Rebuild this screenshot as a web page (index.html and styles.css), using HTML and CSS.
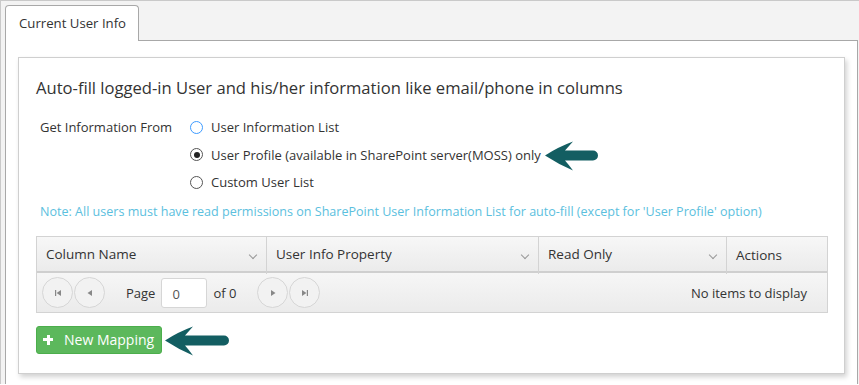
FILE: index.html
```html
<!DOCTYPE html>
<html>
<head>
<meta charset="utf-8">
<link rel="stylesheet" href="styles.css">
</head>
<body>
<div class="outer">
  <div class="tabs">
    <div class="tab">Current User Info</div>
  </div>
  <div class="panel">
    <div class="card">
      <h2 class="title">Auto-fill logged-in User and his/her information like email/phone in columns</h2>
      <div class="source">
        <div class="source-label">Get Information From</div>
        <div class="options">
          <label class="opt"><span class="radio focus"></span>User Information List</label>
          <label class="opt"><span class="radio checked"></span>User Profile (available in SharePoint server(MOSS) only<svg class="arrow a1" width="53" height="30" viewBox="0 0 53 30"><path d="M0 14.5 Q13 6 28 0.5 Q24 5 20 9.5 L48 9.5 A5 5 0 0 1 48 19.5 L20 19.5 Q24 24 28 29.5 Q13 23 0 14.5 Z" fill="#135e62"/></svg></label>
          <label class="opt"><span class="radio"></span>Custom User List</label>
        </div>
      </div>
      <p class="note">Note: All users must have read permissions on SharePoint User Information List for auto-fill (except for 'User Profile' option)</p>
      <div class="grid">
        <div class="grid-head">
          <div class="th">Column Name<span class="chev"></span></div>
          <div class="th">User Info Property<span class="chev"></span></div>
          <div class="th">Read Only<span class="chev"></span></div>
          <div class="th actions">Actions</div>
        </div>
        <div class="pager">
          <span class="pbtn"><svg width="8" height="8" viewBox="0 0 8 8"><rect x="1" y="1" width="1.2" height="6" fill="#888"/><path d="M7 1 L7 7 L2.6 4 Z" fill="#888"/></svg></span>
          <span class="pbtn"><svg width="8" height="8" viewBox="0 0 8 8"><path d="M6 1 L6 7 L1.5 4 Z" fill="#888"/></svg></span>
          <span class="ptext page">Page</span>
          <span class="pinput">0</span>
          <span class="ptext">of 0</span>
          <span class="pbtn next"><svg width="8" height="8" viewBox="0 0 8 8"><path d="M2 1 L2 7 L6.5 4 Z" fill="#888"/></svg></span>
          <span class="pbtn"><svg width="8" height="8" viewBox="0 0 8 8"><path d="M1 1 L1 7 L5.4 4 Z" fill="#888"/><rect x="5.8" y="1" width="1.2" height="6" fill="#888"/></svg></span>
          <span class="pinfo">No items to display</span>
        </div>
      </div>
      <div class="actions-row">
        <button class="btn-new"><span class="plus"></span>New Mapping</button><svg class="arrow a2" width="64" height="30" viewBox="0 0 64 30"><path d="M0 14.5 Q13 6 28 0.5 Q24 5 20 9.5 L59 9.5 A5 5 0 0 1 59 19.5 L20 19.5 Q24 24 28 29.5 Q13 23 0 14.5 Z" fill="#135e62"/></svg>
      </div>
    </div>
  </div>
</div>
</body>
</html>
```

FILE: styles.css
```css
html, body {
  margin: 0;
  padding: 0;
  background: #ffffff;
  font-family: "Open Sans", "Noto Sans", sans-serif;
  color: #333;
}
.outer {
  border-top: 1px solid #c9c9c9;
  border-left: 1px solid #c9c9c9;
  background: #f3f3f3;
  padding: 4px 1px 0 4px;
  height: 384px;
  box-sizing: border-box;
}
.tabs {
  display: flex;
  height: 35px;
}
.tab {
  background: #fff;
  border: 1px solid #a8a8a8;
  border-bottom: none;
  border-radius: 4px 4px 0 0;
  padding: 0 10px 0 13px;
  font-size: 13.2px;
  line-height: 35px;
  color: #333;
  position: relative;
  z-index: 1;
  margin-bottom: -1px;
  height: 36px;
  box-sizing: border-box;
  width: 134px;
}
.panel {
  background: #fff;
  border: 1px solid #a8a8a8;
  border-bottom: none;
  padding: 16px 12px 0 12px;
  height: 345px;
  box-sizing: border-box;
}
.card {
  border: 1px solid #cfcfcf;
  box-shadow: 2px 3px 5px rgba(0,0,0,0.18);
  padding: 18px 16px 17px 17px;
  background: #fff;
}
.title {
  margin: 0;
  font-weight: normal;
  font-size: 16.6px;
  line-height: 24px;
  color: #333;
}
.source {
  display: flex;
  margin-top: 16px;
  padding-left: 4px;
  font-size: 13px;
}
.source-label {
  width: 150px;
  line-height: 22px;
}
.options {
  display: flex;
  flex-direction: column;
  gap: 5.5px;
}
.opt {
  display: flex;
  align-items: center;
  line-height: 22px;
  height: 22px;
}
.radio {
  width: 11px;
  height: 11px;
  border: 1px solid #555;
  border-radius: 50%;
  margin-right: 8px;
  box-sizing: content-box;
  position: relative;
  background: #fff;
}
.radio.focus {
  border-color: #3d9bff;
}
.radio.checked::after {
  content: "";
  position: absolute;
  left: 2.5px;
  top: 2.5px;
  width: 6px;
  height: 6px;
  border-radius: 50%;
  background: #222;
}
.arrow { margin-left: 4px; }
.a1 { margin-top: 2px; }
.note {
  margin: 10px 0 0 4px;
  font-size: 12.55px;
  color: #5bc0de;
  line-height: 18px;
}
.grid {
  margin-top: 15px;
  border: 1px solid #d3d3d3;
}
.grid-head {
  display: grid;
  grid-template-columns: 229px 272px 188px 1fr;
  background: linear-gradient(#f7f7f7, #ebebeb);
  border-bottom: 2px solid #cfcfcf;
  height: 34px;
}
.th {
  font-size: 13.5px;
  line-height: 34px;
  padding-left: 9px;
  border-left: 1px solid #d3d3d3;
  position: relative;
}
.th:first-child { border-left: none; }
.th.actions { line-height: 37px; }
.chev {
  position: absolute;
  right: 10px;
  top: 15px;
  width: 5px;
  height: 5px;
  border-right: 1px solid #999;
  border-bottom: 1px solid #999;
  transform: rotate(45deg);
}
.pager {
  display: flex;
  align-items: center;
  height: 39px;
  padding: 0 5px;
  background: linear-gradient(#f6f6f6, #ebebeb);
  font-size: 13px;
}
.pbtn {
  width: 29px;
  height: 29px;
  border: 1px solid #d6d6d6;
  border-radius: 50%;
  display: flex;
  align-items: center;
  justify-content: center;
  margin-right: 1px;
  background: #f2f2f2;
}
.pbtn.next { margin-left: 21px; }
.ptext.page { margin-left: 20px; margin-right: 6px; }
.pinput {
  width: 46px;
  height: 30px;
  border: 1px solid #d6d6d6;
  border-radius: 3px;
  background: #fff;
  box-sizing: border-box;
  padding: 6px 0 0 10px;
  margin-right: 6px;
  color: #555;
}
.pinfo {
  margin-left: auto;
  margin-right: 15px;
}
.actions-row {
  display: flex;
  align-items: center;
  margin-top: 10px;
}
.btn-new {
  display: flex;
  align-items: center;
  height: 28px;
  width: 126px;
  background: #5cb85c;
  border: 1px solid #4cae4c;
  border-radius: 3px;
  color: #fff;
  font-family: "Open Sans", "Noto Sans", sans-serif;
  font-size: 14px;
  padding: 0 0 0 5px;
  box-sizing: border-box;
}
.plus {
  width: 10px;
  height: 10px;
  position: relative;
  margin-right: 11px;
  margin-left: 1px;
}
.plus::before, .plus::after {
  content: "";
  position: absolute;
  background: #fff;
}
.plus::before { left: 3.5px; top: 0; width: 3px; height: 10px; }
.plus::after { top: 3.5px; left: 0; width: 10px; height: 3px; }
.a2 { margin-left: 3px; margin-top: 3px; }
```
